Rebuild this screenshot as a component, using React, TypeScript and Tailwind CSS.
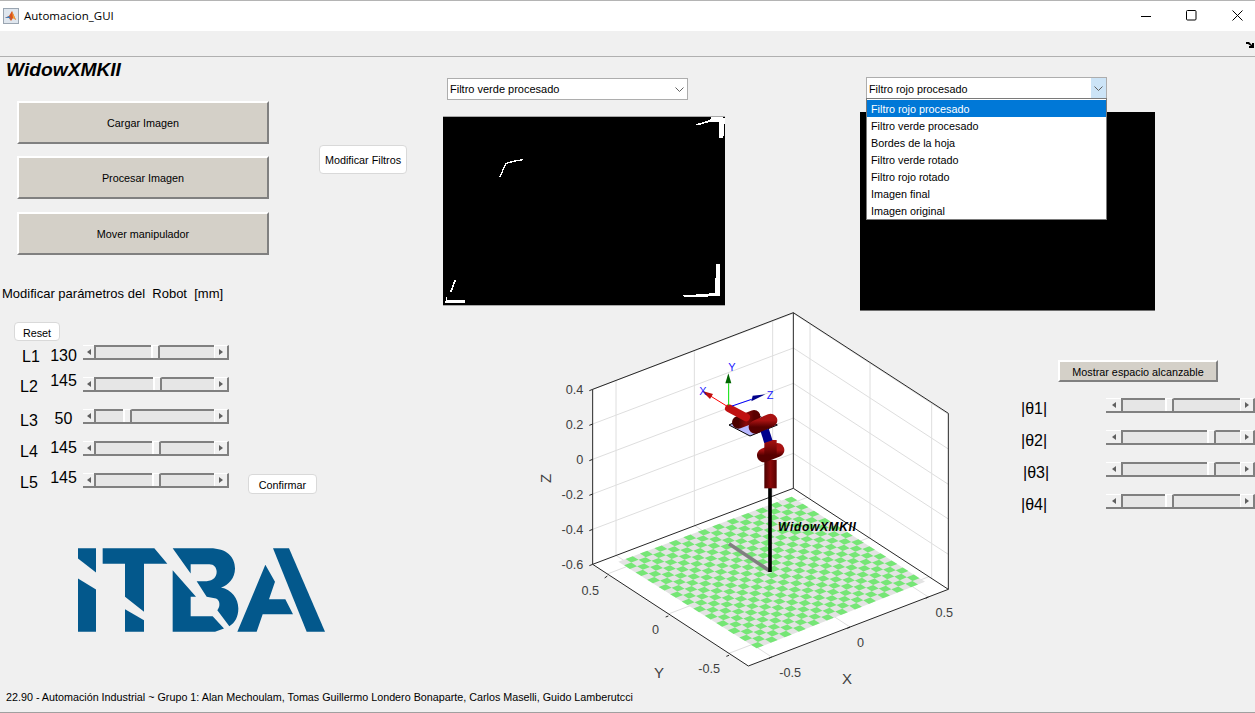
/**
 * Automacion_GUI
 * MATLAB figure with the WidowX MKII controls
 */
import React from 'react';

const FILTERS = [
  'Filtro rojo procesado',
  'Filtro verde procesado',
  'Bordes de la hoja',
  'Filtro verde rotado',
  'Filtro rojo rotado',
  'Imagen final',
  'Imagen original',
];

const LINKS = [
  { name: 'L1', value: '130', nameClass: 'mt-[2px] ml-[22px]', valueClass: 'mt-[1px]', thumb: 'ml-[55px]' },
  { name: 'L2', value: '145', nameClass: 'mt-[0px] ml-[20px]', valueClass: 'mt-[-6px]', thumb: 'ml-[57px]' },
  { name: 'L3', value: '50', nameClass: 'mt-[2px] ml-[20px]', valueClass: 'mt-[0px]', thumb: 'ml-[27px]' },
  { name: 'L4', value: '145', nameClass: 'mt-[1px] ml-[20px]', valueClass: 'mt-[-3px]', thumb: 'ml-[56px]' },
  { name: 'L5', value: '145', nameClass: 'mt-[0px] ml-[20px]', valueClass: 'mt-[-5px]', thumb: 'ml-[56px]' },
];

const ANGLES = [
  { name: '|θ1|', nameClass: 'ml-[41px]', thumb: 'ml-[42px]' },
  { name: '|θ2|', nameClass: 'ml-[41px]', thumb: 'ml-[84px]' },
  { name: '|θ3|', nameClass: 'ml-[43px]', thumb: 'ml-[84px]' },
  { name: '|θ4|', nameClass: 'ml-[41px]', thumb: 'ml-[42px]' },
];

const ScrollSlider = ({ thumb, angle = false }: { thumb: string; angle?: boolean }) => (
  <div className={`flex h-[15px] shrink-0 border-b-2 border-[#808080] ${angle ? 'w-[149px]' : 'w-[146px]'}`}>
    <div className={`flex items-center justify-center shrink-0 border-t border-white bg-[#f0f0f0] ${angle ? 'w-[15px]' : 'w-[11px]'}`}>
      <svg width="4" height="6" viewBox="0 0 4 6"><polygon points="4,0 4,6 0,3" fill="#606060" /></svg>
    </div>
    <div className="flex flex-1 min-w-0 bg-[#e6e6e6] border-t-2 border-l-2 border-[#808080]">
      <div className={`w-[9px] h-[13px] mt-[-2px] shrink-0 bg-[#f0f0f0] border-t border-l-2 border-white border-r-2 border-r-[#808080] ${thumb}`} />
    </div>
    <div className="flex items-center justify-center w-[15px] shrink-0 bg-[#f0f0f0] border-t border-white border-l border-r-2 border-r-[#808080]">
      <svg width="4" height="6" viewBox="0 0 4 6"><polygon points="0,0 0,6 4,3" fill="#606060" /></svg>
    </div>
  </div>
);

const ClassicButton = ({ label, className }: { label: string; className: string }) => (
  <button className={`block pt-[2px] bg-[#d4d0c8] border-t-2 border-l-2 border-white border-r-2 border-b-2 border-r-[#808080] border-b-[#808080] text-[10.8px] text-black ${className}`}>
    {label}
  </button>
);

const RoundButton = ({ label, className }: { label: string; className: string }) => (
  <button className={`block pt-[2px] bg-white border border-[#d9d9d9] rounded-[4px] text-[10.8px] text-black ${className}`}>
    {label}
  </button>
);

const Chevron = () => (
  <svg width="9" height="5" viewBox="0 0 9 5" className="shrink-0">
    <polyline points="0.5,0.5 4.5,4.5 8.5,0.5" fill="none" stroke="#606060" strokeWidth="1" />
  </svg>
);

const MatlabIcon = () => (
  <svg width="16" height="16" viewBox="0 0 16 16" className="shrink-0">
    <rect x="0.5" y="0.5" width="15" height="15" fill="#dfe6ee" stroke="#9aa5b1" />
    <polygon points="2,10 6,8 9,3 13,12 10,10 8,13 6,10" fill="#d9541e" />
    <polygon points="2,10 6,8 8,11 6,10" fill="#3f7fbf" />
    <polygon points="9,3 11,8 13,12 10,10" fill="#f2a33a" />
  </svg>
);

const FilteredImage = () => (
  <div className="w-[282px] h-[190px] bg-black border-t border-b border-[#a8a8a8]">
    <svg viewBox="39 141 846 568" preserveAspectRatio="none" className="block w-full h-full" shapeRendering="crispEdges">
      <polygon points="797,163 840,150 845,140 885,143 880,205 866,205 866,156 840,156 800,167" fill="#fff" />
      <polyline points="209,323 228,281 250,275 278,270" fill="none" stroke="#fff" strokeWidth="4" />
      <polygon points="858,585 870,585 870,682 765,686 760,680 855,673" fill="#fff" />
      <polyline points="76,633 62,670" fill="none" stroke="#fff" strokeWidth="5" />
      <polygon points="46,702 49,682 53,695 104,695 104,702" fill="#fff" />
    </svg>
  </div>
);

const ItbaLogo = () => (
  <svg viewBox="54 54 741 251" className="block w-[247px] h-[84px] ml-[78px] mt-[43px]" fill="#03588c">
    <polygon points="54,54 108,54 108,127 54,85" />
    <polygon points="54,145 108,178 108,305 54,305" />
    <polygon points="128,54 283,54 322,101 252,101 252,245 195,200 195,101 128,101" />
    <polygon points="195,237 252,270 252,305 195,305" />
    <polygon points="338,120 408,200 392,200 392,258 458,258 492,295 465,305 338,305" />
    <path d="M338,54 L450,54 C500,54 525,80 525,115 C525,145 505,165 483,172 C515,178 535,205 535,235 C535,260 525,278 508,288 L472,240 C482,228 480,210 468,205 L440,200 L410,153 L440,153 C460,152 470,140 470,125 C470,112 462,102 448,102 L392,102 L392,130 Z" />
    <polygon points="532,305 616,104 645,155 627,207 676,207 699,252 608,252 590,305" />
    <polygon points="639,54 687,54 795,305 740,305" />
  </svg>
);

// Floor corners of the checker board, in the plot's coordinates
const BOARD = { left: [265, 785], top: [785, 590], right: [1185, 845], bottom: [680, 1045] };
const CELLS = 24;

const boardPoint = (u: number, v: number) => {
  const x =
    (1 - u) * (1 - v) * BOARD.left[0] + u * (1 - v) * BOARD.top[0] + u * v * BOARD.right[0] + (1 - u) * v * BOARD.bottom[0];
  const y =
    (1 - u) * (1 - v) * BOARD.left[1] + u * (1 - v) * BOARD.top[1] + u * v * BOARD.right[1] + (1 - u) * v * BOARD.bottom[1];
  return `${x.toFixed(1)},${y.toFixed(1)}`;
};

const checkerCells = () => {
  const cells: string[] = [];
  for (let i = 0; i < CELLS; i++) {
    for (let j = 0; j < CELLS; j++) {
      if ((i + j) % 2 === 0) continue;
      const a = i / CELLS;
      const b = (i + 1) / CELLS;
      const c = j / CELLS;
      const d = (j + 1) / CELLS;
      cells.push(`${boardPoint(a, c)} ${boardPoint(b, c)} ${boardPoint(b, d)} ${boardPoint(a, d)}`);
    }
  }
  return cells;
};

const Z_TICKS = [
  { label: '0.4', y: 268 },
  { label: '0.2', y: 372 },
  { label: '0', y: 478 },
  { label: '-0.2', y: 582 },
  { label: '-0.4', y: 688 },
  { label: '-0.6', y: 793 },
];

const TICK_TEXT = [
  { label: '0.5', x: 207, y: 884, anchor: 'end' },
  { label: '0', x: 387, y: 1001, anchor: 'end' },
  { label: '-0.5', x: 570, y: 1118, anchor: 'end' },
  { label: '-0.5', x: 813, y: 1130, anchor: 'end' },
  { label: '0', x: 1002, y: 1040, anchor: 'end' },
  { label: '0.5', x: 1269, y: 950, anchor: 'end' },
] as const;

const RobotPlot = () => (
  <svg viewBox="0 33 1350 1137" className="block w-[450px] h-[379px] ml-[87px] shrink-0 overflow-visible" fontFamily="'Liberation Sans', Arial, sans-serif">
    <defs>
      <linearGradient id="body" x1="0" x2="1" y1="0" y2="0">
        <stop offset="0" stopColor="#4a0000" />
        <stop offset="0.5" stopColor="#8a0a0a" />
        <stop offset="1" stopColor="#5a0000" />
      </linearGradient>
      <linearGradient id="joint" x1="0" x2="0" y1="0" y2="1">
        <stop offset="0" stopColor="#a81212" />
        <stop offset="1" stopColor="#560000" />
      </linearGradient>
    </defs>

    {/* Walls and floor */}
    <polygon points="188,268 790,38 790,565 188,793" fill="#fff" />
    <polygon points="790,38 1255,340 1255,868 790,565" fill="#fff" />
    <polygon points="188,793 790,565 1255,868 655,1098" fill="#fff" />

    {/* Grid */}
    <g stroke="#dedede" strokeWidth="3" fill="none">
      {Z_TICKS.slice(0, 5).map((t) => (
        <polyline key={t.label} points={`188,${t.y} 790,${t.y - 228} 1255,${t.y + 75}`} />
      ))}
      {[258, 493, 728].map((x) => (
        <line key={x} x1={x} y1={268 - (x - 188) * 0.382} x2={x} y2={793 - (x - 188) * 0.379} />
      ))}
      {[840, 1020, 1205].map((x) => (
        <line key={x} x1={x} y1={38 + (x - 790) * 0.649} x2={x} y2={565 + (x - 790) * 0.652} />
      ))}
      <line x1="258" y1="766" x2="725" y2="1071" />
      <line x1="493" y1="676" x2="960" y2="981" />
      <line x1="728" y1="587" x2="1195" y2="891" />
      <line x1="232" y1="822" x2="832" y2="592" />
      <line x1="415" y1="942" x2="1017" y2="713" />
      <line x1="597" y1="1060" x2="1197" y2="830" />
    </g>

    {/* Checker board */}
    <polygon points="265,785 785,590 1185,845 680,1045" fill="#e3e3e3" />
    <g fill="#76e676">
      {checkerCells().map((points) => (
        <polygon key={points} points={points} />
      ))}
    </g>

    {/* Box edges */}
    <g stroke="#262626" strokeWidth="3" fill="none">
      <polyline points="188,793 188,268 790,38 1255,340 1255,868 655,1098 188,793 790,565 1255,868" />
      <line x1="790" y1="38" x2="790" y2="565" />
      {Z_TICKS.map((t) => (
        <line key={t.label} x1="188" y1={t.y} x2="178" y2={t.y + 4} />
      ))}
      <line x1="232" y1="828" x2="224" y2="834" />
      <line x1="415" y1="948" x2="407" y2="951" />
      <line x1="597" y1="1066" x2="589" y2="1069" />
      <line x1="725" y1="1071" x2="717" y2="1075" />
      <line x1="960" y1="981" x2="952" y2="985" />
      <line x1="1195" y1="891" x2="1187" y2="895" />
    </g>

    {/* Tick labels */}
    <g fill="#404040" fontSize="38">
      {Z_TICKS.map((t) => (
        <text key={t.label} x="160" y={t.y + 15} textAnchor="end">{t.label}</text>
      ))}
      {TICK_TEXT.map((t) => (
        <text key={`${t.label}-${t.x}`} x={t.x} y={t.y} textAnchor={t.anchor}>{t.label}</text>
      ))}
    </g>
    <g fill="#404040" fontSize="45">
      <text x="951" y="1153" textAnchor="middle">X</text>
      <text x="387" y="1134" textAnchor="middle">Y</text>
      <text x="62" y="535" textAnchor="middle" transform="rotate(-90 62 535)">Z</text>
    </g>

    {/* Shadow and pedestal */}
    <line x1="597" y1="731" x2="718" y2="812" stroke="#808080" strokeWidth="11" />
    <line x1="720" y1="560" x2="720" y2="816" stroke="#000" strokeWidth="11" />

    {/* Tool plane */}
    <polygon points="597,375 670,340 742,375 660,408" fill="#b8b8ff" stroke="#000" strokeWidth="3" />

    {/* Robot */}
    <rect x="703" y="480" width="37" height="85" fill="url(#body)" />
    <line x1="702" y1="466" x2="742" y2="450" stroke="url(#joint)" strokeWidth="42" strokeLinecap="round" />
    <rect x="703" y="420" width="37" height="45" fill="url(#joint)" />
    <line x1="704" y1="390" x2="715" y2="425" stroke="#00008b" strokeWidth="26" />
    <line x1="652" y1="358" x2="695" y2="372" stroke="#00008b" strokeWidth="20" />
    <line x1="625" y1="367" x2="672" y2="349" stroke="url(#body)" strokeWidth="38" strokeLinecap="round" />
    <line x1="676" y1="381" x2="722" y2="361" stroke="url(#joint)" strokeWidth="40" strokeLinecap="round" />
    <line x1="597" y1="325" x2="648" y2="352" stroke="#c01010" strokeWidth="24" strokeLinecap="round" />

    {/* Tool frame */}
    <line x1="590" y1="318" x2="535" y2="284" stroke="#ff0000" strokeWidth="3" />
    <polygon points="515,272 549,282 540,297" fill="#c01010" />
    <line x1="596" y1="316" x2="596" y2="250" stroke="#00e000" strokeWidth="3" />
    <polygon points="595,220 604,250 586,250" fill="#006400" />
    <line x1="606" y1="318" x2="665" y2="298" stroke="#0000ff" strokeWidth="3" />
    <polygon points="706,283 668,287 664,304" fill="#00008b" />
    <g fill="#2020ff" fontSize="33">
      <text x="519" y="284" textAnchor="middle">X</text>
      <text x="606" y="214" textAnchor="middle">Y</text>
      <text x="720" y="296" textAnchor="middle">Z</text>
    </g>
    <text x="744" y="692" fontSize="36" letterSpacing="2" fontWeight="700" fontStyle="italic" fill="#000">WidowXMKII</text>
  </svg>
);

export default function App() {
  return (
    <div className="flex flex-col w-full h-[713px] overflow-hidden bg-[#f0f0f0] text-black font-['Liberation_Sans',Arial,sans-serif]">
      {/* Title bar */}
      <div className="flex items-center h-[31px] shrink-0 bg-white border-t border-[#b4b4b4] pl-[3px]">
        <MatlabIcon />
        <span className="ml-[5px] text-[11.5px] font-['Open_Sans',sans-serif]">Automacion_GUI</span>
        <div className="flex items-center ml-auto pr-[12px] pb-[1px] gap-[35px]">
          <svg width="10" height="10" viewBox="0 0 10 10"><line x1="0" y1="5.5" x2="10" y2="5.5" stroke="#000" /></svg>
          <svg width="11" height="11" viewBox="0 0 11 11"><rect x="0.5" y="0.5" width="9.5" height="9.5" rx="1" fill="none" stroke="#000" /></svg>
          <svg width="11" height="11" viewBox="0 0 11 11"><path d="M0.5 0.5 L10.5 10.5 M10.5 0.5 L0.5 10.5" stroke="#000" /></svg>
        </div>
      </div>

      {/* Toolbar */}
      <div className="flex items-center justify-end h-[26px] shrink-0 border-b border-[#b0b0b0] pr-[1px]">
        <svg width="8" height="6" viewBox="0 0 8 6" className="mt-[2px]">
          <path d="M0 0 L3 0 L6 3 L6 1 L8 1 L8 6 L3 6 L3 4 L5 4 L2 2 L0 2 Z" fill="#000" />
        </svg>
      </div>

      <div className="flex flex-1 min-h-0">
        {/* Left column */}
        <div className="flex flex-col w-[443px] shrink-0">
          <h1 className="mt-[3px] ml-[6px] h-[20px] leading-[20px] text-[19.2px] font-bold italic">WidowXMKII</h1>
          <div className="flex mt-[21px] ml-[17px]">
            <div className="flex flex-col">
              <ClassicButton label="Cargar Imagen" className="w-[252px] h-[43px]" />
              <ClassicButton label="Procesar Imagen" className="w-[252px] h-[43px] mt-[12px]" />
              <ClassicButton label="Mover manipulador" className="w-[252px] h-[43px] mt-[13px]" />
            </div>
            <RoundButton label="Modificar Filtros" className="w-[88px] h-[29px] ml-[50px] mt-[44px]" />
          </div>
          <p className="mt-[32px] ml-[2px] h-[14px] leading-[14px] text-[13px] whitespace-pre">Modificar parámetros del  Robot  [mm]</p>
          <RoundButton label="Reset" className="w-[46px] h-[19px] mt-[21px] ml-[14px] pb-[1px]" />

          <div className="flex flex-col mt-[4px]">
            {LINKS.map((link, index) => (
              <div key={link.name} className="flex h-[32px] items-start">
                <div className="flex w-[44px] shrink-0 text-[16px] leading-[20px]">
                  <span className={link.nameClass}>{link.name}</span>
                </div>
                <div className="w-[39px] shrink-0 text-center text-[16px] leading-[20px]">
                  <div className={link.valueClass}>{link.value}</div>
                </div>
                <ScrollSlider thumb={link.thumb} />
                {index === LINKS.length - 1 && (
                  <RoundButton label="Confirmar" className="w-[69px] h-[20px] ml-[19px] mt-[1px]" />
                )}
              </div>
            ))}
          </div>

          <ItbaLogo />
        </div>

        {/* Vision and plot */}
        <div className="flex flex-col flex-1 min-w-0">
          <div className="flex h-[254px] shrink-0">
            <div className="w-[417px] shrink-0">
              <div className="flex items-center justify-between w-[241px] h-[22px] mt-[21px] ml-[4px] bg-white border border-[#adadad] pl-[2px] pr-[3px] text-[11px]">
                <span className="pt-[1px]">Filtro verde procesado</span>
                <Chevron />
              </div>
              <div className="mt-[16px]">
                <FilteredImage />
              </div>
            </div>
            <div className="flex-1 min-w-0">
              <div className="relative w-[241px] h-[22px] mt-[20px] ml-[6px] bg-white border border-[#adadad] text-[10.8px]">
                <div className="flex items-center justify-between h-full pl-[2px]">
                  <span className="pt-[3px]">Filtro rojo procesado</span>
                  <div className="flex items-center justify-center w-[15px] h-full bg-[#cce4f7]">
                    <Chevron />
                  </div>
                </div>
                {/* Open list */}
                <ul className="absolute z-10 left-[-1px] top-[20px] w-[241px] h-[122px] pt-[1px] bg-white border border-[#7a7a7a]">
                  {FILTERS.map((filter, index) => (
                    <li
                      key={filter}
                      className={`h-[17px] leading-[18px] pl-[4px] ${index === 0 ? 'bg-[#0078d7] text-white' : 'text-black'}`}
                    >
                      {filter}
                    </li>
                  ))}
                </ul>
              </div>
              <div className="w-[295px] h-[199px] mt-[13px] bg-black border-b border-[#6e6e6e]" />
            </div>
          </div>

          <div className="flex flex-1 min-h-0">
            <RobotPlot />
            <div className="flex-1 min-w-0">
              <ClassicButton label="Mostrar espacio alcanzable" className="w-[160px] h-[22px] mt-[49px] ml-[78px]" />
              <div className="flex flex-col mt-[16px]">
                {ANGLES.map((angle) => (
                  <div key={angle.name} className="flex h-[32px] items-start">
                    <div className="w-[126px] shrink-0 text-[16px] leading-[22px]">
                      <span className={`block ${angle.nameClass}`}>{angle.name}</span>
                    </div>
                    <ScrollSlider angle thumb={angle.thumb} />
                  </div>
                ))}
              </div>
            </div>
          </div>
        </div>
      </div>

      {/* Credits */}
      <div className="h-[23px] shrink-0 border-b border-[#a0a0a0] pl-[6px] pt-[1px] text-[10.75px] leading-[12px] whitespace-nowrap">
        22.90 - Automación Industrial ~ Grupo 1: Alan Mechoulam, Tomas Guillermo Londero Bonaparte, Carlos Maselli, Guido Lamberutcci
      </div>
    </div>
  );
}
